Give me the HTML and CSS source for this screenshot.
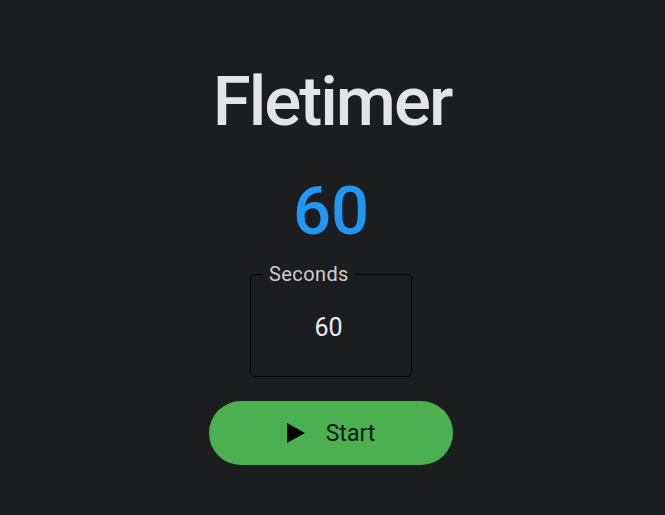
FILE: index.html
```html
<!DOCTYPE html>
<html lang="en">
<head>
    <meta charset="UTF-8">
    <meta name="viewport" content="width=device-width, initial-scale=1.0">
    <title>Fletimer</title>
    <link rel="stylesheet" href="styles.css">
</head>
<body>
    <div class="app">
        <h1 class="title">Fletimer</h1>
        <div class="count">60</div>

        <fieldset class="field">
            <legend class="field-label">Seconds</legend>
            <div class="field-value">60</div>
        </fieldset>

        <button class="start" type="button">
            <svg class="start-icon" width="18" height="20" viewBox="0 0 18 20">
                <polygon points="0,0 18,10 0,20" />
            </svg>
            <span>Start</span>
        </button>
    </div>
</body>
</html>
```

FILE: styles.css
```css
body {
  margin: 0;
  padding: 0;
  background-color: #1c1d1f;
  font-family: Roboto, "Noto Sans", sans-serif;
  color: #e3e3e6;
}

.app {
  display: flex;
  flex-direction: column;
  align-items: center;
  padding: 60px 3px 0 0;
}

.title {
  margin: 0;
  font-size: 69px;
  line-height: 84px;
  font-weight: 500;
  letter-spacing: -2px;
  text-indent: 2px;
  color: #e4e4e7;
}

.count {
  margin-top: 25px;
  font-size: 67px;
  line-height: 84px;
  font-weight: 500;
  color: #2196f3;
}

.field {
  box-sizing: border-box;
  width: 162px;
  margin: 9px 0 0;
  padding: 0;
  min-width: 0;
  border: 1.5px solid #030303;
  border-radius: 5px;
}

.field-label {
  margin-left: 12px;
  padding: 0 6px;
  font-size: 20px;
  line-height: 24px;
  letter-spacing: 0.4px;
  color: #cdcdd0;
}

.field-value {
  height: 90px;
  box-sizing: border-box;
  padding: 0 5px 7px 0;
  line-height: 83px;
  font-size: 25px;
  text-align: center;
  color: #ececef;
}

.start {
  display: flex;
  align-items: center;
  justify-content: center;
  gap: 21px;
  width: 244px;
  height: 64px;
  margin-top: 24px;
  padding: 0;
  border: none;
  border-radius: 32px;
  background: #4caf50;
  font-family: Roboto, "Noto Sans", sans-serif;
  font-size: 23px;
  color: #0c1a0c;
  cursor: pointer;
}

.start-icon {
  display: block;
  fill: #000;
}
```
